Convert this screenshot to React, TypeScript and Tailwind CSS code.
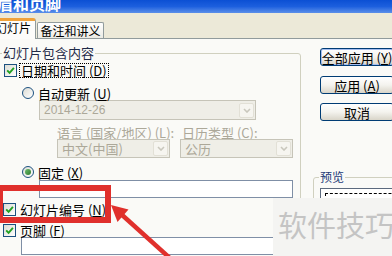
// 页眉和页脚 dialog (Windows XP style) with a red highlight and arrow over "幻灯片编号"
import type { ReactNode } from 'react'

function CheckBox({ on = true }: { on?: boolean }) {
  return (
    <span className="flex h-[13px] w-[13px] shrink-0 items-center justify-center border border-[#1c5180] bg-linear-to-br from-[#dcdcd5] to-white">
      {on && (
        <svg viewBox="0 0 9 9" className="h-[9px] w-[9px]">
          <path d="M1.2 4.3 L3.6 6.8 L7.9 1.9" stroke="#21a121" strokeWidth="1.9" fill="none" />
        </svg>
      )}
    </span>
  )
}

function Radio({ on = false }: { on?: boolean }) {
  return (
    <span className="flex h-[12px] w-[12px] shrink-0 items-center justify-center rounded-full border border-[#1c5180] bg-linear-to-br from-[#dcdcd5] to-white">
      {on && <span className="h-[6px] w-[6px] rounded-full bg-linear-to-br from-[#6cbf6c] to-[#2f7a2f]" />}
    </span>
  )
}

// Disabled combo box: beige field, greyed text, pale arrow button
function Combo({ className, children }: { className: string; children: ReactNode }) {
  return (
    <div className={`flex items-center border border-[#c6c4b8] bg-[#efeee7] text-[#aca899] ${className}`}>
      <span className="flex-1 pl-[4px] leading-none">{children}</span>
      <span className="mr-[1px] flex h-[15px] w-[15px] items-center justify-center rounded-[2px] border border-[#e2e0d6] bg-[#f6f5f0]">
        <svg viewBox="0 0 8 5" className="h-[5px] w-[8px]">
          <path d="M1 1 L4 4 L7 1" stroke="#c9c7bd" strokeWidth="1.6" fill="none" />
        </svg>
      </span>
    </div>
  )
}

function Btn({ children, def = false }: { children: ReactNode; def?: boolean }) {
  return (
    <div
      className={`flex h-[18px] w-[74px] items-center justify-center rounded-[3px] border border-[#003c74] bg-linear-to-b from-white via-[#f4f3ee] to-[#d9d5c9] text-[13px] leading-none ${
        def ? 'shadow-[inset_0_0_0_1px_#a4bdf0]' : ''
      }`}
    >
      {children}
    </div>
  )
}

export default function App() {
  return (
    <div className="relative h-[256px] w-[392px] overflow-hidden bg-[#fafaf7] font-['Noto_Sans_CJK_SC',sans-serif] text-[13px] text-black">
      {/* ─── Title bar (cut off at the top) ─── */}
      <div className="h-[13px] overflow-hidden bg-linear-to-b from-[#0b4fd4] via-[#1c5fde] to-[#5b8fe9]">
        <div className="-ml-[3px] -mt-[5px] text-[16px] font-bold leading-[16px] text-white">眉和页脚</div>
      </div>

      {/* ─── Tabs ─── */}
      <div className="flex h-[26px] items-end border-b border-[#919b9c] bg-[#ece9d8]">
        <div className="relative -mb-px -ml-[10px] flex h-[21px] w-[46px] justify-center rounded-t-[3px] border-x border-t-[3px] border-[#919b9c] border-t-[#f0a23a] bg-[#fcfcfa] text-[12px] leading-[14px]">
          幻灯片
        </div>
        <div className="ml-px flex h-[16px] w-[67px] justify-center rounded-t-[2px] border-x border-t border-[#919b9c] bg-linear-to-b from-white to-[#ecebe4] pt-[1px] text-[12px] leading-[14px]">
          备注和讲义
        </div>
      </div>

      {/* ─── Body ─── */}
      <div className="flex">
        <fieldset className="-ml-[6px] mt-[7px] h-[260px] w-[307px] shrink-0 rounded-[3px] border border-[#d0d0bf]">
          <legend className="ml-[7px] px-[1px] text-[13px] leading-[14px] text-[#1f2a48]">幻灯片包含内容</legend>

          <div className="mt-[3px] flex h-[15px] items-center pl-[9px]">
            <CheckBox />
            <span className="ml-[2px] flex h-[15px] items-center border border-dotted border-black px-[1px] leading-none">
              日期和时间 (<u>D</u>)
            </span>
          </div>

          <div className="mt-[8px] flex h-[14px] items-center pl-[27px]">
            <Radio />
            <span className="ml-[4px] leading-none">自动更新 (<u>U</u>)</span>
          </div>

          <Combo className="ml-[44px] h-[20px] w-[217px] font-['Liberation_Sans',sans-serif] text-[12px]">2014-12-26</Combo>

          <div className="mt-[5px] flex h-[14px] items-center text-[#aca899]">
            <span className="ml-[62px] w-[125px] leading-none">语言 (国家/地区) (<u>L</u>):</span>
            <span className="leading-none">日历类型 (<u>C</u>):</span>
          </div>

          <div className="flex">
            <Combo className="ml-[62px] h-[19px] w-[113px]">中文(中国)</Combo>
            <Combo className="ml-[10px] h-[19px] w-[113px]">公历</Combo>
          </div>

          <div className="mt-[7px] flex h-[14px] items-center pl-[27px]">
            <Radio on />
            <span className="ml-[4px] leading-none">固定 (<u>X</u>)</span>
          </div>

          <div className="ml-[44px] mt-[1px] h-[18px] w-[254px] border border-[#7f8fa6] bg-white" />

          <div className="mt-[4px] flex h-[14px] items-center pl-[8px]">
            <CheckBox />
            <span className="ml-[4px] leading-none">幻灯片编号 (<u>N</u>)</span>
          </div>

          <div className="mt-[8px] flex h-[13px] items-center pl-[8px]">
            <CheckBox />
            <span className="ml-[4px] leading-none">页脚 (<u>F</u>)</span>
          </div>

          <div className="ml-[26px] h-[18px] w-[272px] border border-[#7f8fa6] bg-white" />
        </fieldset>

        {/* ─── Right column: buttons + preview ─── */}
        <div className="ml-[12px] flex w-[90px] shrink-0 flex-col">
          <div className="ml-[7px] mt-[9px]">
            <Btn def>全部应用 (<u>Y</u>)</Btn>
          </div>
          <div className="ml-[7px] mt-[10px]">
            <Btn>应用 (<u>A</u>)</Btn>
          </div>
          <div className="ml-[7px] mt-[9px]">
            <Btn>取消</Btn>
          </div>

          <fieldset className="mt-[50px] h-[100px] w-[100px] rounded-[3px] border border-[#d0d0bf]">
            <legend className="ml-[5px] px-[1px] text-[12px] leading-[12px] text-[#1d3b78]">预览</legend>
            <div className="ml-[6px] mt-[5px] h-[80px] border border-[#5c6a7e] bg-white pl-[4px] pt-[4px]">
              <div className="h-[60px] border-l border-t border-dashed border-black" />
            </div>
          </fieldset>
        </div>
      </div>

      {/* ─── Annotation overlays ─── */}
      <div className="absolute left-[-3px] top-[185px] h-[38px] w-[114px] border-[6px] border-[#e0302c]" />

      <svg className="pointer-events-none absolute left-0 top-0 h-[256px] w-[392px]" viewBox="0 0 392 256">
        <line x1="172" y1="260" x2="121" y2="214" stroke="#e0302c" strokeWidth="4.5" />
        <polygon points="111,205 128.5,209.5 117.5,222" fill="#e0302c" />
      </svg>

      <div className="absolute left-[273px] top-[198px] h-[58px] w-[119px] bg-[#f4f4f2] pl-[5px] pt-[12px] text-[29px] leading-[29px] text-[#c4c4c4]">
        <span className="whitespace-nowrap">软件技巧</span>
      </div>
    </div>
  )
}
